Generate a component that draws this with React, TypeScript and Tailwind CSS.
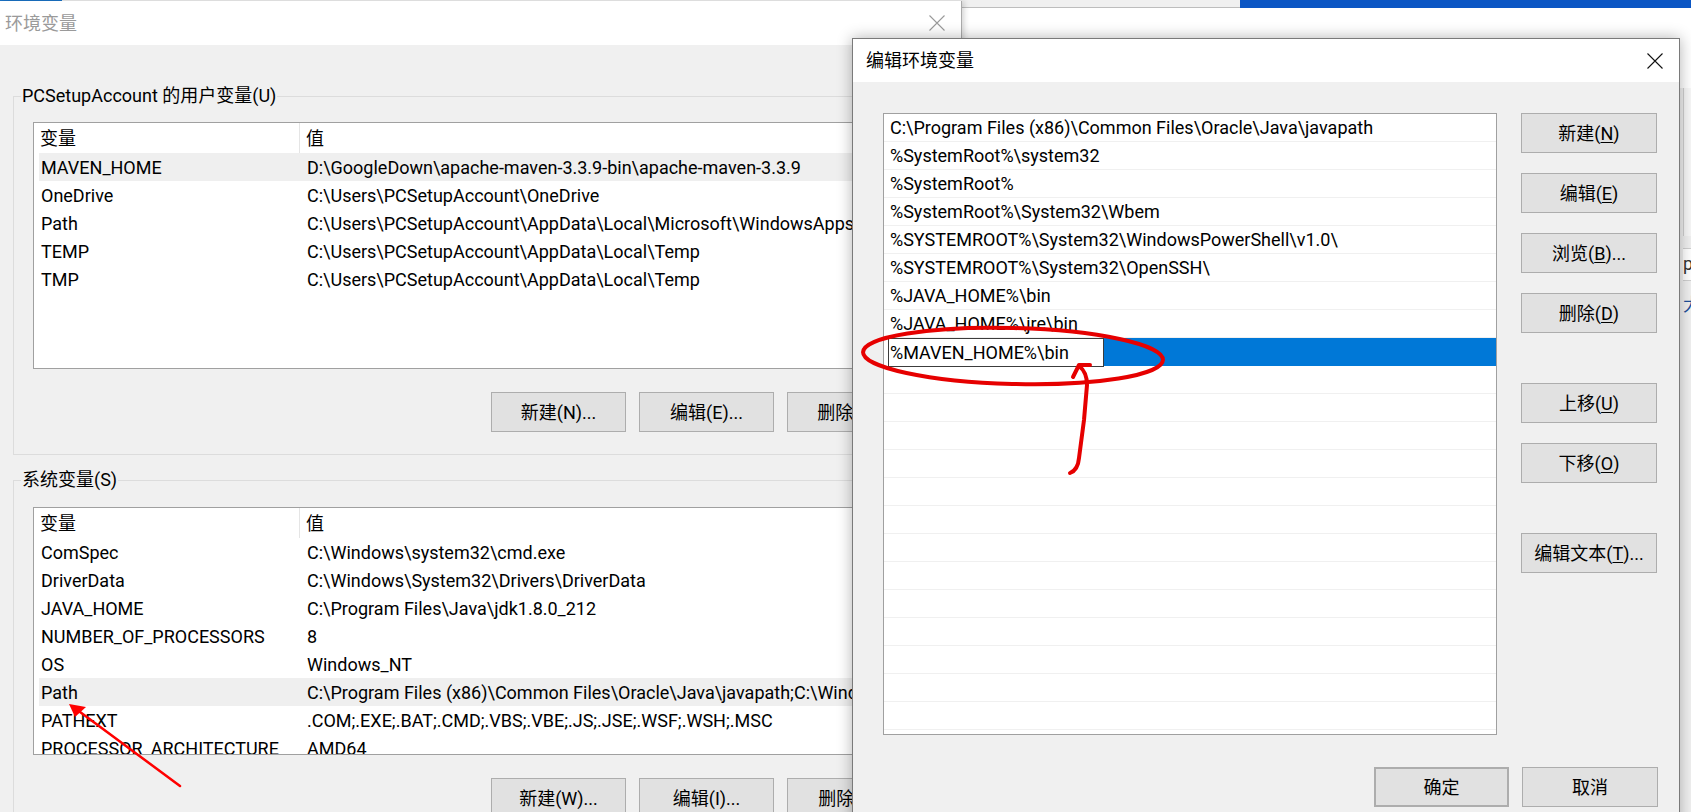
import React from "react";

const userVars = [
  ["MAVEN_HOME", "D:\\GoogleDown\\apache-maven-3.3.9-bin\\apache-maven-3.3.9"],
  ["OneDrive", "C:\\Users\\PCSetupAccount\\OneDrive"],
  ["Path", "C:\\Users\\PCSetupAccount\\AppData\\Local\\Microsoft\\WindowsApps;"],
  ["TEMP", "C:\\Users\\PCSetupAccount\\AppData\\Local\\Temp"],
  ["TMP", "C:\\Users\\PCSetupAccount\\AppData\\Local\\Temp"],
];

const sysVars = [
  ["ComSpec", "C:\\Windows\\system32\\cmd.exe"],
  ["DriverData", "C:\\Windows\\System32\\Drivers\\DriverData"],
  ["JAVA_HOME", "C:\\Program Files\\Java\\jdk1.8.0_212"],
  ["NUMBER_OF_PROCESSORS", "8"],
  ["OS", "Windows_NT"],
  ["Path", "C:\\Program Files (x86)\\Common Files\\Oracle\\Java\\javapath;C:\\Windows\\system32"],
  ["PATHEXT", ".COM;.EXE;.BAT;.CMD;.VBS;.VBE;.JS;.JSE;.WSF;.WSH;.MSC"],
  ["PROCESSOR_ARCHITECTURE", "AMD64"],
];

const pathEntries = [
  "C:\\Program Files (x86)\\Common Files\\Oracle\\Java\\javapath",
  "%SystemRoot%\\system32",
  "%SystemRoot%",
  "%SystemRoot%\\System32\\Wbem",
  "%SYSTEMROOT%\\System32\\WindowsPowerShell\\v1.0\\",
  "%SYSTEMROOT%\\System32\\OpenSSH\\",
  "%JAVA_HOME%\\bin",
  "%JAVA_HOME%\\jre\\bin",
];

const CloseIcon = ({ color }: { color: string }) => (
  <svg width="16" height="16" viewBox="0 0 16 16" className="shrink-0">
    <path d="M0.5 0.5 L15.5 15.5 M15.5 0.5 L0.5 15.5" stroke={color} strokeWidth="1.1" fill="none" />
  </svg>
);

const WinButton = ({ children, className = "" }: { children: React.ReactNode; className?: string }) => (
  <div
    className={`flex h-[40px] shrink-0 items-center justify-center border border-[#adadad] bg-[#e1e1e1] text-[18px] text-black whitespace-nowrap ${className}`}
  >
    {children}
  </div>
);

const VarList = ({ rows, selected, height }: { rows: string[][]; selected: number; height: string }) => (
  <div className={`ml-[19px] mr-[19px] overflow-hidden border border-[#a0a0a0] bg-white pl-[5px] text-[18px] text-black ${height}`}>
    <div className="flex h-[30px] items-center">
      <div className="flex h-full w-[261px] shrink-0 items-center border-r border-[#e5e5e5] pl-[1px]">变量</div>
      <div className="pl-[6px]">值</div>
    </div>
    {rows.map(([name, value], i) => (
      <div key={name} className={`flex h-[28px] items-center whitespace-nowrap ${i === selected ? "bg-[#efefef]" : ""}`}>
        <div className="w-[261px] shrink-0 overflow-hidden pl-[2px]">{name}</div>
        <div className="pl-[7px]">{value}</div>
      </div>
    ))}
  </div>
);

const GroupBox = ({ title, children, className = "" }: { title: string; children: React.ReactNode; className?: string }) => (
  <fieldset className={`border border-[#dcdcdc] pb-[22px] ${className}`}>
    <legend className="ml-[7px] px-[1px] text-[18px] leading-[24px] text-black">{title}</legend>
    {children}
  </fieldset>
);

export default function App() {
  return (
    <div className="relative h-[812px] w-[1691px] overflow-hidden bg-white font-['Roboto','Noto_Sans_CJK_SC',sans-serif]">
      {/* windows behind */}
      <div className="absolute left-0 top-0 flex h-[8px] w-full">
        <div className="h-[3px] w-[62px] bg-[#1a73c8]" />
        <div className="h-[8px] flex-1 border-b border-[#bdbdbd] bg-[#f0f0f0]" />
        <div className="h-[8px] w-[451px] bg-[#0b56c4]" />
      </div>
      <div className="absolute left-[1680px] top-[88px] flex h-[724px] w-[11px] flex-col bg-[#f0f0f0] pl-[3px]">
        <div className="h-[148px] border-l border-[#d0d0d0] bg-[#f7f7f7]" />
        <div className="mt-[12px] h-[33px] border-y border-[#d0d0d0] bg-white text-[18px] leading-[30px] text-[#333]">p</div>
        <div className="mt-[12px] text-[18px] leading-[24px] text-[#1e4f9a]">大</div>
      </div>

      {/* 环境变量 dialog */}
      <div className="absolute left-0 top-[1px] h-[840px] w-[962px] border-r border-[#aaaaaa] bg-[#f0f0f0] shadow-[2px_0_6px_rgba(0,0,0,0.18)]">
        <div className="flex h-[44px] items-center justify-between bg-white pl-[5px] pr-[16px]">
          <span className="text-[18px] text-[#9a9a9a]">环境变量</span>
          <CloseIcon color="#9a9a9a" />
        </div>
        <div className="flex flex-col pl-[13px] pr-[13px] pt-[39px]">
          <GroupBox title="PCSetupAccount 的用户变量(U)">
            <div className="mt-[14px]">
              <VarList rows={userVars} selected={0} height="h-[247px]" />
            </div>
            <div className="ml-[477px] mt-[23px] flex gap-[13px]">
              <WinButton className="w-[135px]">新建(N)...</WinButton>
              <WinButton className="w-[135px]">编辑(E)...</WinButton>
              <WinButton className="w-[135px]">删除(D)...</WinButton>
            </div>
          </GroupBox>
          <GroupBox title="系统变量(S)" className="mt-[13px]">
            <div className="mt-[15px]">
              <VarList rows={sysVars} selected={5} height="h-[248px]" />
            </div>
            <div className="ml-[477px] mt-[23px] flex gap-[13px]">
              <WinButton className="w-[135px]">新建(W)...</WinButton>
              <WinButton className="w-[135px]">编辑(I)...</WinButton>
              <WinButton className="w-[135px]">删除(L)...</WinButton>
            </div>
          </GroupBox>
        </div>
      </div>

      {/* 编辑环境变量 dialog */}
      <div className="absolute left-[852px] top-[38px] h-[800px] w-[828px] border border-[#7a7a7a] bg-[#f0f0f0] shadow-[0_0_14px_rgba(0,0,0,0.3)]">
        <div className="flex h-[43px] items-center justify-between bg-white pl-[13px] pr-[16px]">
          <span className="text-[18px] text-black">编辑环境变量</span>
          <CloseIcon color="#111" />
        </div>
        <div className="pl-[30px] pr-[21px] pt-[31px]">
          <div className="flex gap-[24px]">
            <div className="h-[622px] w-[614px] shrink-0 overflow-hidden border border-[#a0a0a0] bg-white text-[18px] text-black">
              {pathEntries.map((p) => (
                <div key={p} className="flex h-[28px] items-center whitespace-nowrap border-b border-[#f0f0f0] pl-[6px]">
                  {p}
                </div>
              ))}
              <div className="flex h-[28px]">
                <div className="ml-[4px] flex h-[29px] w-[216px] shrink-0 items-center border border-[#3c3c3c] bg-white pl-[1px] whitespace-nowrap">
                  %MAVEN_HOME%\bin
                </div>
                <div className="h-full flex-1 bg-[#0078d7]" />
              </div>
              {Array.from({ length: 14 }).map((_, i) => (
                <div key={i} className="h-[28px] border-b border-[#f0f0f0]" />
              ))}
            </div>
            <div className="flex w-[136px] flex-col">
              <WinButton>
                新建(<u className="underline-offset-2">N</u>)
              </WinButton>
              <WinButton className="mt-[20px]">
                编辑(<u className="underline-offset-2">E</u>)
              </WinButton>
              <WinButton className="mt-[20px]">
                浏览(<u className="underline-offset-2">B</u>)...
              </WinButton>
              <WinButton className="mt-[20px]">
                删除(<u className="underline-offset-2">D</u>)
              </WinButton>
              <WinButton className="mt-[50px]">
                上移(<u className="underline-offset-2">U</u>)
              </WinButton>
              <WinButton className="mt-[20px]">
                下移(<u className="underline-offset-2">O</u>)
              </WinButton>
              <WinButton className="mt-[50px]">
                编辑文本(<u className="underline-offset-2">T</u>)...
              </WinButton>
            </div>
          </div>
          <div className="mt-[32px] flex justify-end gap-[13px]">
            <WinButton className="w-[135px] border-2 border-[#0078d7]">确定</WinButton>
            <WinButton className="w-[136px]">取消</WinButton>
          </div>
        </div>
      </div>

      {/* red annotations */}
      <svg className="pointer-events-none absolute left-0 top-0" width="1691" height="812" viewBox="0 0 1691 812">
        <ellipse cx="1013" cy="356" rx="150" ry="28" transform="rotate(1.5 1013 356)" fill="none" stroke="#e60000" strokeWidth="4" />
        <path
          d="M1070 473 Q1078 470 1079 458 L1084 420 L1087 385 Q1087 372 1079 366 M1073 377 L1079 365 L1090 365"
          fill="none"
          stroke="#e60000"
          strokeWidth="4"
          strokeLinecap="round"
          strokeLinejoin="round"
        />
        <path d="M180 786 L76 709" stroke="#ff0000" strokeWidth="2.5" strokeLinecap="round" />
        <path d="M69 704 L86 707 L75 717 Z" fill="#ff0000" />
      </svg>
    </div>
  );
}
